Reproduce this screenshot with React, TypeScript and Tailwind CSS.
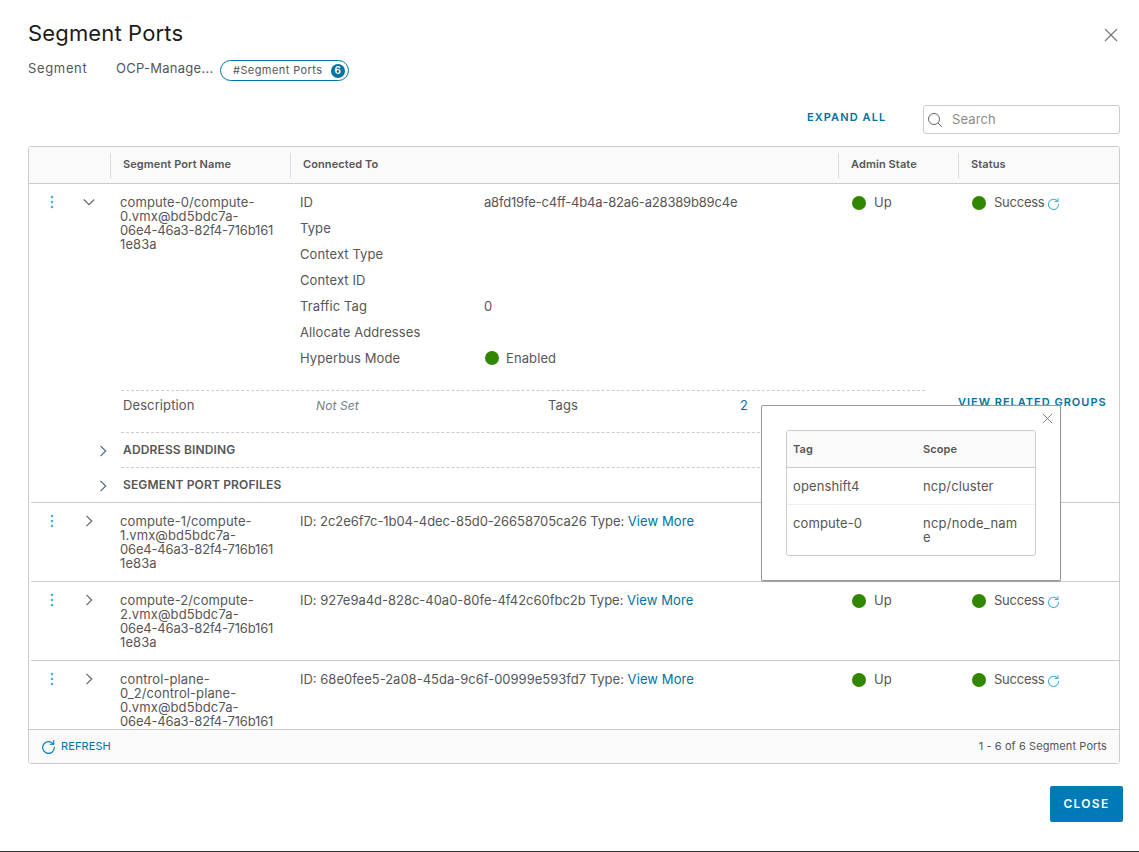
import React from "react";

function Dot() {
  return <span className="inline-block w-[14px] h-[14px] rounded-full bg-[#318700] shrink-0" />;
}

function RefreshIcon({ size = 13, color = "#49afd9" }: { size?: number; color?: string }) {
  return (
    <svg width={size} height={size} viewBox="0 0 36 36" fill="none" stroke={color} strokeWidth="2.8" className="shrink-0">
      <path d="M29.5 12.5A14 14 0 1 0 32 20" strokeLinecap="round" />
      <path d="M21 12.5h9.5V3" fill="none" />
    </svg>
  );
}

function Kebab() {
  return (
    <svg width="4" height="14" viewBox="0 0 4 14" fill="#49afd9" className="shrink-0">
      <circle cx="2" cy="2" r="1.3" />
      <circle cx="2" cy="7" r="1.3" />
      <circle cx="2" cy="12" r="1.3" />
    </svg>
  );
}

function Chevron({ open = false, color = "#666666" }: { open?: boolean; color?: string }) {
  return (
    <svg width="12" height="12" viewBox="0 0 12 12" fill="none" stroke={color} strokeWidth="1.2" className={open ? "rotate-90 shrink-0" : "shrink-0"}>
      <path d="M3.5 0.8L8.7 6L3.5 11.2" />
    </svg>
  );
}

function CloseX({ size = 14 }: { size?: number }) {
  return (
    <svg width={size} height={size} viewBox="0 0 14 14" fill="none" stroke="#747474" strokeWidth="1.1">
      <path d="M1 1L13 13M13 1L1 13" />
    </svg>
  );
}

function Status() {
  return (
    <>
      <div className="w-[119px] pl-[13px] mt-[1px] flex gap-[8px] h-[14px] items-center">
        <Dot />
        <span>Up</span>
      </div>
      <div className="flex-1 pl-[14px] mt-[1px] flex h-[14px] items-center">
        <Dot />
        <span className="ml-[8px] tracking-[-0.25px]">Success</span>
        <span className="ml-[3px]"><RefreshIcon /></span>
      </div>
    </>
  );
}

function NameLines({ lines }: { lines: string[] }) {
  return (
    <div className="w-[180px] leading-[14px] whitespace-nowrap">
      {lines.map((l) => (
        <div key={l} className={l.startsWith("06e4") ? "tracking-[-0.17px]" : ""}>{l}</div>
      ))}
    </div>
  );
}

function Row({ lines, id, idClass }: { lines: string[]; id: string; idClass: string }) {
  return (
    <div className="flex border-b border-[#cccccc] ml-[2px] pt-[11px] shrink-0 h-[79px]">
      <div className="w-[42px] flex justify-center"><Kebab /></div>
      <div className="w-[47px] pl-[10px] pt-[1px]"><Chevron /></div>
      <NameLines lines={lines} />
      <div className="w-[539px] leading-[14px] whitespace-nowrap">
        <span className={idClass}>{id} Type: </span>
        <span className="text-[#0072a3]">View More</span>
      </div>
      <Status />
    </div>
  );
}

const details: [string, React.ReactNode][] = [
  ["ID", <span className="tracking-[-0.18px]">a8fd19fe-c4ff-4b4a-82a6-a28389b89c4e</span>],
  ["Type", ""],
  ["Context Type", ""],
  ["Context ID", ""],
  ["Traffic Tag", "0"],
  ["Allocate Addresses", ""],
  ["Hyperbus Mode", <span className="flex items-center gap-[7px] ml-[1px]"><Dot /><span>Enabled</span></span>],
];

export default function App() {
  return (
    <div
      className="relative w-[1139px] h-[852px] bg-white overflow-hidden flex flex-col border-b border-[#333333] text-[#565656] text-[13px] tracking-[0.1px]"
      style={{ fontFamily: '"Inter", "Noto Sans", sans-serif' }}
    >
      <div className="flex items-start justify-between pl-[28px] pr-[21px] pt-[20px] h-[60px] shrink-0">
        <h1 className="text-[22px] leading-[26px] text-[#1b1b1b] font-normal tracking-[0.15px]">Segment Ports</h1>
        <div className="pt-[8px]"><CloseX /></div>
      </div>

      <div className="flex items-center pl-[28px] h-[21px] shrink-0">
        <span className="w-[88px] pb-[3px] tracking-[0.65px]">Segment</span>
        <span className="w-[104px] pb-[3px] tracking-[0.27px] whitespace-nowrap">OCP-Manage...</span>
        <span className="flex items-center justify-between w-[129px] h-[21px] border border-[#0072a3] rounded-full pl-[12px] pr-[3px] text-[11px] tracking-[0.42px] text-[#565656]">
          <span className="pb-[1px]">#Segment Ports</span>
          <span className="w-[14px] h-[14px] rounded-full bg-[#0072a3] text-white font-semibold text-[10px] flex items-center justify-center">6</span>
        </span>
      </div>

      <div className="flex items-start pt-[24px] pl-[807px] h-[65px] shrink-0">
        <span className="w-[116px] pt-[5px] text-[#0072a3] text-[11px] font-semibold tracking-[1.1px] leading-[14px] whitespace-nowrap">EXPAND ALL</span>
        <div className="w-[197px] h-[29px] border border-[#cccccc] rounded-[3px] flex items-center pl-[3px]">
          <svg width="16" height="16" viewBox="0 0 16 16" fill="none" stroke="#666666" strokeWidth="1">
            <circle cx="7" cy="7" r="5.5" />
            <path d="M11 11L15 15" />
          </svg>
          <span className="ml-[9px] text-[#8c8c8c]">Search</span>
        </div>
      </div>

      <div className="ml-[28px] w-[1092px] h-[618px] border border-[#cccccc] rounded-[3px] flex flex-col overflow-hidden shrink-0">
        <div className="flex items-center h-[37px] bg-[#fafafa] border-b border-[#cccccc] text-[11px] font-semibold leading-[14px] shrink-0">
          <div className="w-[81px] h-[25px]" />
          <div className="w-[180px] h-[25px] border-l border-[#dddddd] pl-[12px] pb-[2px] flex items-center">Segment Port Name</div>
          <div className="w-[548px] h-[25px] border-l border-[#dddddd] pl-[12px] pb-[2px] flex items-center">Connected To</div>
          <div className="w-[120px] h-[25px] border-l border-[#dddddd] pl-[12px] pb-[2px] flex items-center">Admin State</div>
          <div className="flex-1 h-[25px] border-l border-[#dddddd] pl-[12px] pb-[2px] flex items-center">Status</div>
        </div>

        <div className="flex-1 min-h-0 overflow-hidden">
          <div className="border-b border-[#cccccc] ml-[2px] h-[319px] flex flex-col shrink-0">
            <div className="flex pt-[11px] h-[206px] shrink-0">
              <div className="w-[42px] flex justify-center"><Kebab /></div>
              <div className="w-[47px] pl-[10px] pt-[1px]"><Chevron open /></div>
              <NameLines lines={["compute-0/compute-", "0.vmx@bd5bdc7a-", "06e4-46a3-82f4-716b161", "1e83a"]} />
              <div className="w-[539px] flex flex-col gap-[12px] leading-[14px]">
                {details.map(([k, v]) => (
                  <div key={k} className="flex h-[14px] items-center">
                    <span className="w-[184px]">{k}</span>
                    <span>{v}</span>
                  </div>
                ))}
              </div>
              <Status />
            </div>
            <div className="ml-[90px] flex items-start">
              <div className="w-[804px]">
                <div className="flex items-center h-[42px] border-t border-dashed border-[#cccccc] pl-[2px] pb-[12px]">
                  <span className="w-[193px]">Description</span>
                  <span className="w-[232px] italic text-[#6f7f8c] text-[12px]">Not Set</span>
                  <span className="w-[192px]">Tags</span>
                  <span className="text-[#0072a3]">2</span>
                </div>
                <div className="flex items-center h-[35px] border-t border-dashed border-[#cccccc] pl-[2px] font-semibold text-[12px] tracking-[0.15px] relative">
                  <span className="absolute left-[-24px] top-[12px]"><Chevron color="#4d6b85" /></span>
                  ADDRESS BINDING
                </div>
                <div className="flex items-center h-[35px] border-t border-dashed border-[#cccccc] pl-[2px] font-semibold text-[12px] tracking-[0.15px] relative">
                  <span className="absolute left-[-24px] top-[12px]"><Chevron color="#4d6b85" /></span>
                  SEGMENT PORT PROFILES
                </div>
              </div>
              <span className="ml-[33px] pt-[5px] text-[#0072a3] text-[11px] font-semibold tracking-[1px] leading-[14px] whitespace-nowrap">VIEW RELATED GROUPS</span>
            </div>
          </div>

          <Row lines={["compute-1/compute-", "1.vmx@bd5bdc7a-", "06e4-46a3-82f4-716b161", "1e83a"]} id="ID: 2c2e6f7c-1b04-4dec-85d0-26658705ca26" idClass="tracking-[-0.06px]" />
          <Row lines={["compute-2/compute-", "2.vmx@bd5bdc7a-", "06e4-46a3-82f4-716b161", "1e83a"]} id="ID: 927e9a4d-828c-40a0-80fe-4f42c60fbc2b" idClass="tracking-[-0.02px]" />
          <Row lines={["control-plane-", "0_2/control-plane-", "0.vmx@bd5bdc7a-", "06e4-46a3-82f4-716b161"]} id="ID: 68e0fee5-2a08-45da-9c6f-00999e593fd7" idClass="tracking-[0px]" />
        </div>

        <div className="flex items-center justify-between h-[34px] bg-[#fafafa] border-t border-[#cccccc] pl-[12px] pr-[12px] shrink-0">
          <span className="flex items-center gap-[5px] text-[#0072a3] text-[11px]">
            <RefreshIcon size={15} color="#0079b8" />
            REFRESH
          </span>
          <span className="text-[11px]">1 - 6 of 6 Segment Ports</span>
        </div>
      </div>

      <div className="flex justify-end pr-[16px] pt-[22px]">
        <button className="w-[73px] h-[36px] bg-[#0079b8] rounded-[2px] text-white text-[12px] font-semibold tracking-[1.3px]">CLOSE</button>
      </div>

      <div className="absolute left-[761px] top-[405px] w-[300px] h-[176px] bg-white border border-[#999999] rounded-[2px] shadow-[0_1px_1px_rgba(0,0,0,0.2)] pl-[24px] pt-[24px]">
        <div className="absolute right-[7px] top-[7px]"><CloseX size={11} /></div>
        <div className="w-[250px] h-[126px] border border-[#cccccc] rounded-[3px] overflow-hidden">
          <div className="flex items-center h-[37px] bg-[#fafafa] border-b border-[#cccccc] text-[11px] font-semibold">
            <span className="w-[130px] pl-[6px]">Tag</span>
            <span className="pl-[6px]">Scope</span>
          </div>
          <div className="flex h-[37px] border-b border-[#eeeeee] pt-[11px] leading-[14px]">
            <span className="w-[130px] pl-[6px]">openshift4</span>
            <span className="pl-[6px]">ncp/cluster</span>
          </div>
          <div className="flex pt-[11px] leading-[14px]">
            <span className="w-[130px] pl-[6px]">compute-0</span>
            <span className="pl-[6px] tracking-[0.25px]">ncp/node_nam<br />e</span>
          </div>
        </div>
      </div>
    </div>
  );
}
